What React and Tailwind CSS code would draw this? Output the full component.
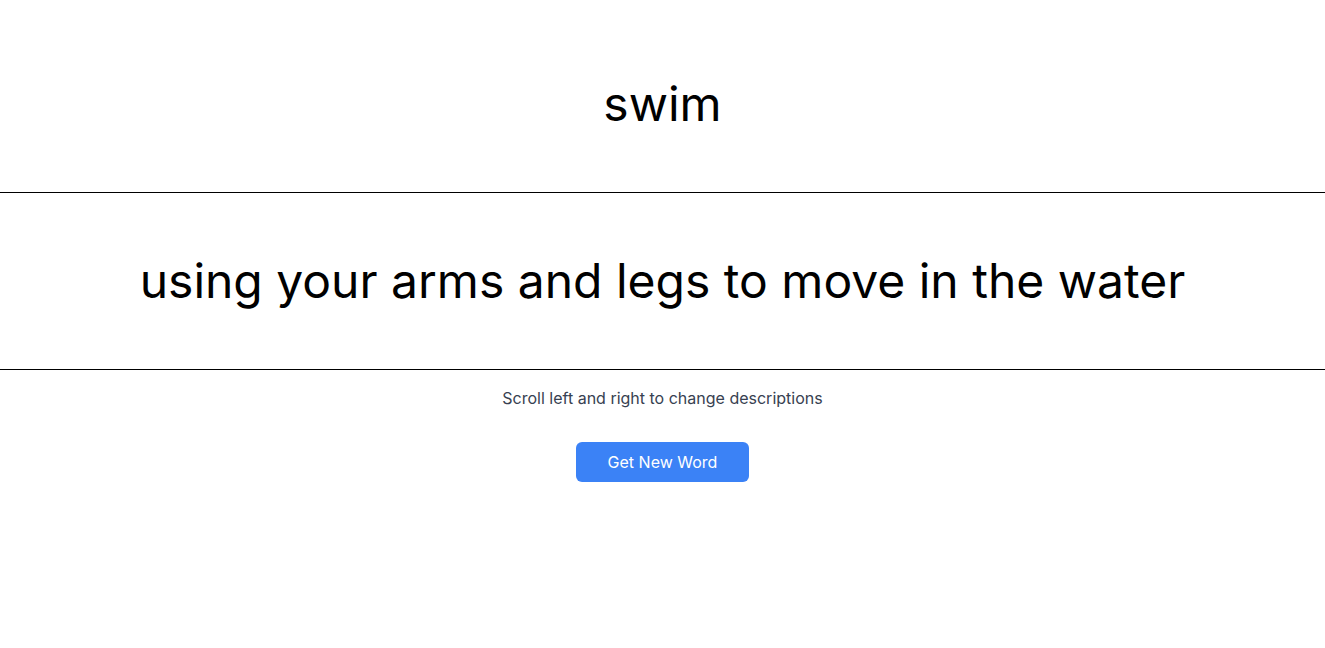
export default function App() {
  return (
    <div className="min-h-screen bg-white text-black" style={{ fontFamily: "Inter, 'Liberation Sans', sans-serif" }}>
      <div className="mt-4 py-16 text-center">
        <h1 className="text-5xl leading-[48px]">swim</h1>
      </div>
      <div className="border-y border-black py-16 text-center">
        <p className="text-5xl leading-[48px]">using your arms and legs to move in the water</p>
      </div>
      <div className="flex flex-col items-center">
        <p className="mt-4 text-base leading-6 text-[#374151]">Scroll left and right to change descriptions</p>
        <button className="mt-8 h-10 px-8 rounded-md bg-[#3b82f6] text-white text-base">Get New Word</button>
      </div>
    </div>
  );
}
